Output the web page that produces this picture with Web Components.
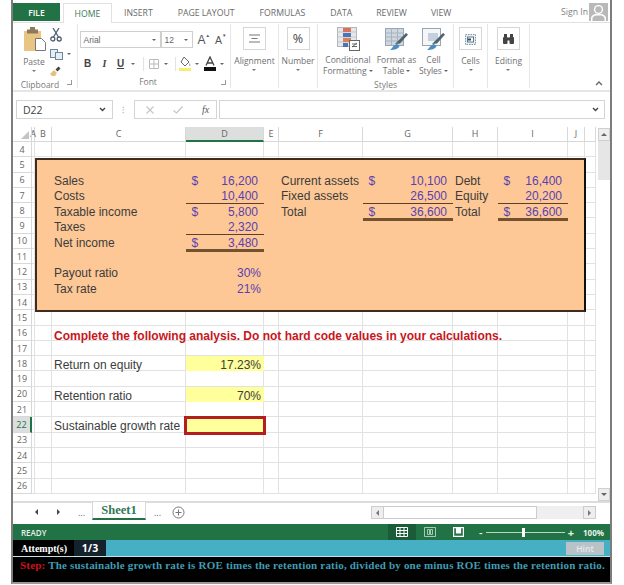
<!DOCTYPE html>
<html>
<head>
<meta charset="utf-8">
<title>Sheet</title>
<style>
    html, body { margin: 0; background: #fff; }
    body { padding: 0 12px 0 11px; height: 585px; box-sizing: border-box; overflow: hidden; }
</style>
</head>
<body>
<xl-window>
    <xl-tabs></xl-tabs>
    <xl-ribbon></xl-ribbon>
    <xl-formula-bar></xl-formula-bar>
    <xl-sheet></xl-sheet>
    <xl-sheet-tabs></xl-sheet-tabs>
    <xl-status></xl-status>
    <xl-attempt></xl-attempt>
    <xl-step></xl-step>
</xl-window>

<script>
// small helper, every element is just a template + shadow root
function define(name, html) {
    const template = document.createElement('template');
    template.innerHTML = html;
    customElements.define(name, class extends HTMLElement {
        constructor() {
            super();
            this.attachShadow({ mode: 'open' });
            this.shadowRoot.appendChild(template.content.cloneNode(true));
        }
    });
}

define('xl-window', /*html*/`
<style>
    :host {
        display: flex;
        flex-direction: column;
        height: 582px;
        border-left: 2px solid #7d7d7d;
        border-right: 2px solid #7d7d7d;
        border-bottom: 2px solid #9a9a9a;
        font-family: "Open Sans", sans-serif;
    }
</style>
<slot></slot>
`);

define('xl-tabs', /*html*/`
<style>
    :host {
        display: flex;
        height: 23px;
        padding-top: 3px;
        box-sizing: border-box;
        align-items: stretch;
        font-size: 8.700px;
        color: #6a6a6a;
        border-bottom: 1px solid #e1e1e1;
        flex: none;
    }
    .file {
        width: 47px;
        height: 18px;
        background: #217346;
        color: #fff;
        display: flex;
        align-items: center;
        justify-content: center;
        font-weight: 600;
        font-size: 8.500px;
    }
    .home {
        width: 49px;
        height: 20px;
        margin-left: 3px;
        background: #fff;
        border: 1px solid #e1e1e1;
        border-bottom: 0;
        box-sizing: border-box;
        display: flex;
        align-items: center;
        justify-content: center;
        color: #3c7a58;
    }
    .tab { display: flex; align-items: center; height: 20px; }
    .sign {
        margin-left: auto;
        display: flex;
        align-items: center;
        gap: 1px;
        height: 18px;
        padding-right: 2px;
        color: #808080;
    }
</style>
<div class="file">FILE</div>
<div class="home">HOME</div>
<div class="tab" style="margin-left:12px">INSERT</div>
<div class="tab" style="margin-left:25px">PAGE LAYOUT</div>
<div class="tab" style="margin-left:25px">FORMULAS</div>
<div class="tab" style="margin-left:25px">DATA</div>
<div class="tab" style="margin-left:24px">REVIEW</div>
<div class="tab" style="margin-left:24px">VIEW</div>
<div class="sign">Sign In
    <svg width="19" height="18" viewBox="0 0 19 18">
        <rect width="19" height="18" fill="#b9b9b9"/>
        <circle cx="9.500" cy="6.500" r="4.600" fill="#fff"/>
        <circle cx="9.500" cy="6.500" r="3.200" fill="#b9b9b9"/>
        <path d="M2 18v-3c0-2 3-4 5-4h5c2 0 5 2 5 4v3h-1.500v-3c0-1-2-2.500-3.500-2.500H7c-1.500 0-3.500 1.500-3.500 2.500v3z" fill="#fff"/>
    </svg>
</div>
`);

define('xl-rgroup', /*html*/`
<style>
    :host {
        display: flex;
        flex-direction: column;
        align-items: center;
        height: 64px;
        box-sizing: border-box;
        border-right: 1px solid #e6e6e6;
        position: relative;
        flex: none;
    }
    .body { height: 51px; width: 100%; display: flex; align-items: flex-start; justify-content: center; }
    .name { font-size: 8.500px; color: #7a7a7a; height: 12px; line-height: 12px; margin-top: 4px; text-align: center; }
</style>
<div class="body"><slot></slot></div>
<div class="name"><slot name="name"></slot></div>
`);

// a ribbon button: square icon box, label, small caret
define('xl-rbox', /*html*/`
<style>
    :host {
        display: flex;
        flex-direction: column;
        align-items: center;
        font-size: 8.500px;
        line-height: 11px;
        color: #6f6f6f;
        white-space: nowrap;
    }
    .box {
        width: 23px;
        height: 23px;
        box-sizing: border-box;
        border: 1px solid #d6d6d6;
        display: flex;
        align-items: center;
        justify-content: center;
        margin: 3px 0 5px;
        color: #444;
        font-size: 12.500px;
    }
    .caret { width: 0; height: 0; border: 2px solid transparent; border-top: 2px solid #777; margin-top: 3px; }
</style>
<div class="box"><slot name="icon"></slot></div>
<slot></slot>
<div class="caret"></div>
`);

define('xl-ribbon', /*html*/`
<style>
    :host {
        display: flex;
        height: 69px;
        padding-top: 1px;
        box-sizing: border-box;
        border-bottom: 2px solid #e6e6e6;
        position: relative;
        color: #6f6f6f;
        font-size: 8.500px;
        flex: none;
    }
    .clip-in { display: grid; grid-template-columns: 37px 27px; width: 64px; margin-top: 3px; }
    .paste { display: flex; flex-direction: column; align-items: center; grid-row: span 3; line-height: 11px; padding-left: 5px; gap: 5px; }
    .paste i { width: 0; height: 0; border: 2px solid transparent; border-top: 2px solid #777; margin-top: -2px; }
    .mini { display: flex; align-items: center; gap: 4px; }
    .c { display: inline-block; width: 0; height: 0; border: 2px solid transparent; border-top: 2px solid #666; margin-top: 2px; }
    .font-in { width: 149px; margin-top: 7px; display: flex; flex-direction: column; gap: 7px; }
    .row { display: flex; align-items: center; }
    .fname, .fsize {
        height: 17px;
        border: 1px solid #cfcfcf;
        box-sizing: border-box;
        display: flex;
        align-items: center;
        justify-content: space-between;
        padding: 0 4px 0 3px;
        font-size: 8.500px;
        color: #666;
    }
    .fname { width: 81px; font-family: "Liberation Sans", sans-serif; }
    .fsize { width: 32px; border-left: 1px solid #cfcfcf; margin-left: 0; font-family: "Liberation Sans", sans-serif; }
    .grow { font-family: "Liberation Sans", sans-serif; color: #555; }
    .grow sup { font-size: 4.500px; vertical-align: 7px; line-height: 0; }
    .btns { height: 17px; color: #444; font-family: "Liberation Sans", sans-serif; font-size: 10px; }
    .btns b, .btns em, .btns u { width: 8px; text-align: center; font-weight: bold; }
    .sep { width: 1px; height: 14px; background: #e3e3e3; }
    .styles-in { display: grid; grid-template-columns: 52px 45px 29px; width: 136px; padding-left: 4px; box-sizing: border-box; margin-top: 3px; }
    .st { display: flex; flex-direction: column; align-items: center; text-align: center; line-height: 11px; white-space: nowrap; gap: 3px; }
    .launcher { position: absolute; bottom: 3px; width: 4px; height: 4px; border-right: 1px solid #999; border-bottom: 1px solid #999; }
    .collapse { position: absolute; right: 7px; bottom: 4px; }
</style>
<xl-rgroup style="width:65px">
    <div class="clip-in">
        <div class="paste">
            <svg width="23" height="24" viewBox="0 0 23 24">
                <rect x="1" y="4" width="17" height="20" fill="#e9c583"/>
                <rect x="4" y="2.500" width="11" height="4" fill="#8b7b5c"/>
                <rect x="7" y="0" width="5" height="3" fill="#8b7b5c"/>
                <path d="M12.500 11.500h6l4 4v8h-10z" fill="#fff" stroke="#777"/>
            </svg>
            Paste
            <i></i>
        </div>
        <div class="mini" style="height:16px">
            <svg width="12" height="14" viewBox="0 0 12 14" fill="none" stroke="#506070" stroke-width="1.300">
                <path d="M3 0l5.500 9M9 0L3.500 9"/><circle cx="2.800" cy="11" r="2"/><circle cx="9.200" cy="11" r="2"/>
            </svg>
        </div>
        <div class="mini" style="height:19px;padding-top:3px;box-sizing:border-box">
            <svg width="13" height="11" viewBox="0 0 13 11" fill="#e6eef4" stroke="#6d8799"><rect x=".5" y=".5" width="7" height="8"/><rect x="5.500" y="3.500" width="7" height="7"/></svg>
            <span class="c"></span>
        </div>
        <div class="mini" style="height:14px;padding-top:3px;box-sizing:border-box">
            <svg width="11" height="10" viewBox="0 0 11 10"><path d="M0 8l4-4 3 3-2 3H2z" fill="#e6bf7a"/><path d="M5.500 3.500L8.500 0.500l2 2-3 3z" fill="#444"/></svg>
        </div>
    </div>
    <span slot="name" style="margin-right:10px">Clipboard</span>
    <span class="launcher" style="right:5px"></span>
</xl-rgroup>
<xl-rgroup style="width:153px">
    <div class="font-in">
        <div class="row">
            <div class="fname">Arial<span class="c"></span></div>
            <div class="fsize">12<span class="c"></span></div>
            <div class="grow" style="margin-left:5px;font-size:12px">A<sup>▲</sup></div>
            <div class="grow" style="margin-left:5px;font-size:10.500px">A<sup>▼</sup></div>
        </div>
        <div class="row btns">
            <b style="margin-left:4px">B</b>
            <em style="margin-left:9px;font-family:'Liberation Serif',serif">I</em>
            <u style="margin-left:8px">U</u>
            <span class="c" style="margin-left:6px"></span>
            <span class="sep" style="margin-left:8px"></span>
            <svg style="margin-left:5px" width="10" height="10" viewBox="0 0 10 10" fill="none" stroke="#bbb"><path d="M.5.500h9v9h-9zM5 .5v9M.5 5h9"/></svg>
            <span class="c" style="margin-left:5px"></span>
            <span class="sep" style="margin-left:7px"></span>
            <svg style="margin-left:3px" width="12" height="17" viewBox="0 0 12 17"><path d="M5 2l5 5-4 4-4-4z" fill="#fff" stroke="#666"/><path d="M10.500 8c1 1.500 1 3 0 3z" fill="#666"/><rect y="13" width="12" height="3" fill="#f5ef6d"/></svg>
            <span class="c" style="margin-left:4px"></span>
            <svg style="margin-left:5px" width="12" height="15" viewBox="0 0 12 15"><path d="M2 9.500L6 1l4 8.500M3.500 7h5" fill="none" stroke="#444" stroke-width="1.300"/><rect y="11" width="12" height="4" fill="#111"/></svg>
            <span class="c" style="margin-left:4px"></span>
        </div>
    </div>
    <span slot="name" style="margin-right:12px">Font</span>
    <span class="launcher" style="right:4px"></span>
</xl-rgroup>
<xl-rgroup style="width:48px">
    <xl-rbox>
        <svg slot="icon" width="11" height="9" viewBox="0 0 11 9" stroke="#777"><path d="M0 1h11M2.500 4.500h6M0 8h11"/></svg>
        Alignment
    </xl-rbox>
</xl-rgroup>
<xl-rgroup style="width:39px">
    <xl-rbox><span slot="icon">%</span>Number</xl-rbox>
</xl-rgroup>
<xl-rgroup style="width:136px">
    <div class="styles-in">
        <div class="st">
            <svg width="23" height="24" viewBox="0 0 23 24">
                <rect x="0.500" y="0.500" width="19" height="19" fill="#e4e9ef" stroke="#b5b5b5"/>
                <path d="M.5 5h19M.5 10h19M.5 15h19" stroke="#c5c5c5"/>
                <rect x="6" y="1" width="8" height="4" fill="#d9725a"/>
                <rect x="6" y="6" width="8" height="4" fill="#4d74b5"/>
                <rect x="6" y="11" width="8" height="4" fill="#d9825a"/>
                <rect x="6" y="16" width="5" height="4" fill="#4d74b5"/>
                <rect x="12.500" y="13.500" width="10" height="10" fill="#fff" stroke="#666"/>
                <path d="M15 20l5-4M15 17h5M15 19.500h5" stroke="#444" fill="none" stroke-width=".8"/>
            </svg>
            <span>Conditional<br>Formatting <span class="c"></span></span>
        </div>
        <div class="st">
            <svg width="23" height="24" viewBox="0 0 23 24">
                <rect x="0.500" y="1.500" width="18" height="17" fill="#cdd7e2" stroke="#9aa5ad"/>
                <path d="M.5 6h18M.5 10h18M.5 14h18M6.500 1.500v17M12.500 1.500v17" stroke="#aab3bd" fill="none"/>
                <path d="M10 17l3-3 8-8 2 1.500-8 9z" fill="#51616d"/>
                <path d="M5 23c2-1 3-5 7-6l2.500 2c-1 3-5 4-9.500 4z" fill="#4e8cc0"/>
            </svg>
            <span>Format as<br>Table <span class="c"></span></span>
        </div>
        <div class="st">
            <svg width="23" height="24" viewBox="0 0 23 24">
                <rect x="0.500" y="1.500" width="18" height="17" fill="#f4f6f8" stroke="#9aa5ad"/>
                <rect x="6" y="6" width="10" height="8" fill="#c3d0de"/>
                <path d="M10 17l3-3 8-8 2 1.500-8 9z" fill="#51616d"/>
                <path d="M5 23c2-1 3-5 7-6l2.500 2c-1 3-5 4-9.500 4z" fill="#4e8cc0"/>
            </svg>
            <span>Cell<br>Styles <span class="c"></span></span>
        </div>
    </div>
    <span slot="name">Styles</span>
</xl-rgroup>
<xl-rgroup style="width:34px">
    <xl-rbox>
        <svg slot="icon" width="11" height="12" viewBox="0 0 11 12"><rect x=".5" y="1.500" width="10" height="10" fill="#e8eef4" stroke="#7f98a8" stroke-dasharray="1.500 1"/><rect x="2.500" y="4" width="6" height="5" fill="#fff" stroke="#5d7688"/><rect x="3" y="5.500" width="3" height="2" fill="#2f4a5f"/></svg>
        Cells
    </xl-rbox>
</xl-rgroup>
<xl-rgroup style="width:42px">
    <xl-rbox>
        <svg slot="icon" width="11" height="10" viewBox="0 0 11 10" fill="#444"><rect x="0" y="3" width="4.500" height="7" rx="1"/><rect x="6.500" y="3" width="4.500" height="7" rx="1"/><rect x="1" y="0" width="3" height="4"/><rect x="7" y="0" width="3" height="4"/><rect x="4" y="3.500" width="3" height="3"/></svg>
        Editing
    </xl-rbox>
</xl-rgroup>
<svg class="collapse" width="8" height="6" viewBox="0 0 8 6" fill="none" stroke="#666" stroke-width="1.400"><path d="M1 5l3-3 3 3"/></svg>
`);

define('xl-formula-bar', /*html*/`
<style>
    :host {
        display: flex;
        align-items: center;
        height: 35px;
        padding: 8px 5px 8px 3px;
        box-sizing: border-box;
        color: #444;
        font-size: 10.500px;
        flex: none;
    }
    .box { height: 19px; border: 1px solid #d4d4d4; box-sizing: border-box; display: flex; align-items: center; }
    .name { width: 97px; justify-content: space-between; padding: 0 6px; }
    .dots { width: 20px; text-align: center; color: #aaa; font-size: 9px; }
    .fn { width: 83px; margin-left: 1px; position: relative; justify-content: flex-start; padding-left: 11px; gap: 19px; }
    .fn i { font-family: "Liberation Serif", serif; color: #555; font-size: 10px; }
    .input { flex: 1; margin-left: 2px; justify-content: flex-end; padding-right: 5px; }
</style>
<div class="box name">D22
    <svg width="7" height="5" viewBox="0 0 7 5" fill="none" stroke="#444" stroke-width="1.400"><path d="M1 1l2.500 2.500L6 1"/></svg>
</div>
<div class="dots">⁝</div>
<div class="box fn">
    <svg width="8" height="8" viewBox="0 0 8 8" fill="none" stroke="#c6c6c6" stroke-width="1.200"><path d="M.5.500l7 7M7.500.5l-7 7"/></svg>
    <svg width="10" height="8" viewBox="0 0 10 8" fill="none" stroke="#c6c6c6" stroke-width="1.200"><path d="M.5 4.500L3.500 7 9.500.5"/></svg>
    <i>fx</i>
</div>
<div class="box input">
    <svg width="7" height="5" viewBox="0 0 7 5" fill="none" stroke="#444" stroke-width="1.400"><path d="M1 1l2.500 2.500L6 1"/></svg>
</div>
`);

const COLS = [['', 19], ['A', 3], ['B', 17], ['C', 134], ['D', 78], ['E', 15], ['F', 84], ['G', 90], ['H', 45], ['I', 70], ['J', 17], ['', 11]];
const ROW_H = 15.3;
const TRACKS = COLS.map(c => c[1] + 'px').join(' ');

const sheetTemplate = document.createElement('template');
sheetTemplate.innerHTML = /*html*/`
<style>
    :host {
        display: flex;
        flex: none;
        height: 374px;
        position: relative;
        font-family: "Liberation Sans", sans-serif;
        font-size: 12px;
        color: #3c3c3c;
    }
    .grid {
        display: grid;
        grid-template-columns: ${TRACKS};
        grid-template-rows: 15px repeat(23, ${ROW_H}px);
        width: 583px;
        height: 367px;
        flex: none;
        overflow: hidden;
        align-content: start;
    }
    .cell { border-right: 1px solid #e2e2e2; border-bottom: 1px solid #e2e2e2; box-sizing: border-box; white-space: nowrap; line-height: 16px; }
    .ch, .rh { font-family: "Open Sans", sans-serif; font-size: 9px; color: #666; display: flex; align-items: center; justify-content: center; border-color: #d8d8d8; }
    .rh { padding-top: 1px; }
    .ch.sel { background: #dcdfdd; border-bottom: 2px solid #217346; }
    .rh.sel { background: #dcdfdd; border-right: 2px solid #217346; color: #217346; }
    .corner { position: relative; }
    .corner::after { content: ''; position: absolute; right: 2px; bottom: 2px; border: 4px solid transparent; border-right-color: #c4c4c4; border-bottom-color: #c4c4c4; }
    .label { padding: 1px 0 0 2px; position: relative; z-index: 1; }
    .yellow { background: #ffff9c; text-align: right; padding: 1px 3px 0 0; border: 0; }
    .note { font-weight: bold; color: #c8161d; padding-top: 2px; }
    .active { background: #ffff9c; outline: 3px solid #b41e1e; outline-offset: -1px; position: relative; z-index: 2; top: .5px; }
    .panel {
        position: absolute;
        left: 22px;
        top: 31px;
        width: 551px;
        height: 154px;
        box-sizing: border-box;
        border: 2px solid #3e2d1e;
        border-right-color: #111;
        background: #fdc896;
        display: grid;
        grid-template-columns: 15px 134px 78px 15px 84px 90px 45px 70px;
        grid-template-rows: repeat(9, 15.450px);
        padding-top: 12.800px;
        line-height: 17px;
    }
    .t { padding-left: 2px; white-space: nowrap; }
    .num { color: #5a3fb2; text-align: right; padding-right: 3px; }
    .d { color: #5a3fb2; display: flex; justify-content: space-between; padding: 0 6px 0 5.500px; box-sizing: border-box; }
    .u { border-bottom: 1px solid #5e4022; }
    .uu { border-bottom: 3px solid #73532f; margin-bottom: -2px; }
    .bar { width: 12px; flex: none; margin-left: 2px; background: #fff; display: flex; flex-direction: column; padding-top: 1px; box-sizing: border-box; }
    .btn { height: 13px; flex: none; background: #eee; border: 1px solid #d0d0d0; box-sizing: border-box; display: flex; align-items: center; justify-content: center; }
    .tri-u { border: 3px solid transparent; border-bottom: 3px solid #666; border-top: 0; }
    .tri-d { border: 3px solid transparent; border-top: 3px solid #666; border-bottom: 0; }
    .thumb { height: 39px; flex: none; background: #e6e6e6; }
    .rest { flex: 1; }
</style>
<div class="grid"></div>
<div class="panel"></div>
<div class="bar">
    <div class="btn"><span class="tri-u"></span></div>
    <div class="thumb"></div>
    <div class="rest"></div>
    <div class="btn"><span class="tri-d"></span></div>
</div>
`;

class XlSheet extends HTMLElement {

    constructor() {
        super();
        this.attachShadow({ mode: 'open' });
        const sh = this.shadowRoot;
        sh.appendChild(sheetTemplate.content.cloneNode(true));
        this.grid = sh.querySelector('.grid');
        this.panel = sh.querySelector('.panel');
        this.drawGrid();
        this.drawPanel();
    }

    drawGrid() {
        const content = {
            '16C': ['note label', 'Complete the following analysis. Do not hard code values in your calculations.'],
            '18C': ['label', 'Return on equity'],
            '18D': ['yellow', '17.23%'],
            '20C': ['label', 'Retention ratio'],
            '20D': ['yellow', '70%'],
            '22C': ['label', 'Sustainable growth rate'],
            '22D': ['active', ''],
        };
        let html = '';
        COLS.forEach((c, i) => {
            const cls = i === 0 ? 'corner' : c[0] === 'D' ? 'sel' : '';
            html += `<div class="cell ch ${cls}">${c[0]}</div>`;
        });
        for (let r = 4; r <= 26; r++) {
            COLS.forEach((c, i) => {
                if (i === 0) {
                    html += `<div class="cell rh ${r === 22 ? 'sel' : ''}">${r}</div>`;
                    return;
                }
                const item = content[r + c[0]];
                html += `<div class="cell ${item ? item[0] : ''}">${item ? item[1] : ''}</div>`;
            });
        }
        this.grid.innerHTML = html;
    }

    drawPanel() {
        // rows and columns count inside the panel
        const put = (r, c, cls, text) =>
            `<div class="${cls}" style="grid-row:${r};grid-column:${c}">${text}</div>`;
        const money = (r, c, sign, val, cls = '') =>
            `<div class="d ${cls}" style="grid-row:${r};grid-column:${c}"><span>${sign}</span><span>${val}</span></div>`;

        let html = '';
        ['Sales', 'Costs', 'Taxable income', 'Taxes', 'Net income', '', 'Payout ratio', 'Tax rate'].forEach((t, i) => {
            if (t) html += put(i + 1, 2, 't', t);
        });
        html += money(1, 3, '$', '16,200');
        html += money(2, 3, '', '10,400', 'u');
        html += money(3, 3, '$', '5,800');
        html += money(4, 3, '', '2,320', 'u');
        html += money(5, 3, '$', '3,480', 'uu');
        html += put(7, 3, 'num', '30%');
        html += put(8, 3, 'num', '21%');

        html += put(1, 5, 't', 'Current assets') + put(2, 5, 't', 'Fixed assets') + put(3, 5, 't', 'Total');
        html += money(1, 6, '$', '10,100');
        html += money(2, 6, '', '26,500', 'u');
        html += money(3, 6, '$', '36,600', 'uu');

        html += put(1, 7, 't', 'Debt') + put(2, 7, 't', 'Equity') + put(3, 7, 't', 'Total');
        html += money(1, 8, '$', '16,400');
        html += money(2, 8, '', '20,200', 'u');
        html += money(3, 8, '$', '36,600', 'uu');
        this.panel.innerHTML = html;
    }

}
customElements.define('xl-sheet', XlSheet);

define('xl-sheet-tabs', /*html*/`
<style>
    :host {
        display: flex;
        align-items: flex-start;
        height: 23px;
        border-top: 2px solid #dcdcdc;
        box-sizing: border-box;
        font-size: 9px;
        color: #666;
        position: relative;
        flex: none;
    }
    .nav { display: flex; align-items: center; height: 18px; padding-left: 22px; width: 79px; box-sizing: border-box; }
    .tri-l { border: 3px solid transparent; border-right: 3px solid #444; border-left: 0; }
    .tri-r { border: 3px solid transparent; border-left: 3px solid #444; border-right: 0; }
    .sheet {
        width: 54px;
        height: 19px;
        margin-top: -2px;
        border: 1px solid #d8d8d8;
        border-bottom: 2px solid #217346;
        box-sizing: border-box;
        color: #2d7a55;
        font-family: "Liberation Serif", serif;
        font-weight: bold;
        font-size: 12.500px;
        display: flex;
        align-items: center;
        justify-content: center;
        background: #fff;
    }
    .more { display: flex; align-items: center; height: 18px; }
    .hs { position: absolute; right: 14px; top: 3px; width: 225px; height: 13px; display: flex; }
    .hb { width: 13px; background: #eee; border: 1px solid #ccc; box-sizing: border-box; display: flex; align-items: center; justify-content: center; }
    .ht { width: 153px; border: 1px solid #ccc; border-left: 0; box-sizing: border-box; background: #fff; }
    .hr { flex: 1; background: #efefef; margin-right: 13px; }
</style>
<div class="nav"><span class="tri-l"></span><span class="tri-r" style="margin-left:19px"></span><span style="margin-left:18px">...</span></div>
<div class="sheet">Sheet1</div>
<div class="more" style="margin-left:8px;width:18px">...</div>
<div class="more">
    <svg width="13" height="13" viewBox="0 0 13 13" fill="none" stroke="#777"><circle cx="6.500" cy="6.500" r="5.500"/><path d="M6.500 3.500v6M3.500 6.500h6"/></svg>
</div>
<div class="hs">
    <div class="hb"><span class="tri-l" style="border-right-color:#777"></span></div>
    <div class="ht"></div>
    <div class="hr"></div>
    <div class="hb" style="position:absolute;right:0;top:0;height:13px"><span class="tri-r" style="border-left-color:#777"></span></div>
</div>
`);

define('xl-status', /*html*/`
<style>
    :host {
        display: flex;
        align-items: center;
        height: 16px;
        background: #217346;
        color: #e8f1ec;
        font-size: 8px;
        font-weight: 600;
        padding-left: 8px;
        flex: none;
    }
    .views { margin-left: auto; display: flex; align-items: center; height: 16px; }
    .v { width: 28px; height: 16px; display: flex; align-items: center; justify-content: center; }
    .v.on { background: #1a5c38; }
    .zoom { display: flex; align-items: center; margin-left: 5px; width: 100px; padding: 0 3px 0 2px; box-sizing: border-box; gap: 3px; font-size: 11px; }
    .track { flex: 1; height: 1px; background: #b8d8c6; position: relative; }
    .track::after { content: ''; position: absolute; left: 36px; top: -4px; width: 3px; height: 9px; background: #fff; }
    .pct { width: 33px; text-align: center; font-size: 8px; font-weight: 700; }
</style>
READY
<div class="views">
    <div class="v on"><svg width="12" height="10" viewBox="0 0 12 10" fill="none" stroke="#fff"><path d="M.5.500h11v9H.5zM.5 3.500h11M.5 6.500h11M4 .5v9M8 .5v9"/></svg></div>
    <div class="v"><svg width="12" height="10" viewBox="0 0 12 10" fill="none" stroke="#a8c8b6"><path d="M.5.500h11v9H.5zM3.500 2.500h2v5h-2zM6.500 2.500h2v5h-2z"/></svg></div>
    <div class="v"><svg width="11" height="10" viewBox="0 0 11 10" fill="none" stroke="#fff" stroke-width="1.200"><path d="M.6.600h9.800v8.800H.6z"/><path d="M3.500 1v5h4V1" fill="#fff"/></svg></div>
    <div class="zoom"><span>-</span><div class="track"></div><span style="font-weight:700">+</span></div>
    <div class="pct">100%</div>
</div>
`);

define('xl-attempt', /*html*/`
<style>
    :host {
        display: flex;
        align-items: stretch;
        height: 17px;
        background: #46afc4;
        border-bottom: 1px solid #bfe3ea;
        box-sizing: border-box;
        flex: none;
        font-family: "Liberation Serif", serif;
        font-weight: bold;
        color: #fff;
    }
    .k { width: 61px; background: #000; display: flex; align-items: center; padding-left: 8px; box-sizing: border-box; font-size: 10px; }
    .v { width: 32px; background: #14222c; display: flex; align-items: center; justify-content: center; font-family: "Open Sans", sans-serif; font-weight: 700; font-size: 10.500px; }
    .hint { margin: 2px 6px 1px auto; width: 38px; background: #b9c3c7; color: #e6eaec; font-family: "Open Sans", sans-serif; font-weight: 600; font-size: 8.500px; display: flex; align-items: center; justify-content: center; }
</style>
<div class="k">Attempt(s)</div>
<div class="v">1/3</div>
<div class="hint">Hint</div>
`);

define('xl-step', /*html*/`
<style>
    :host {
        display: block;
        flex: 1;
        background: #000;
        color: #3f9db3;
        font-family: "Liberation Serif", serif;
        font-weight: bold;
        font-size: 11px;
        line-height: 14px;
        padding: 1px 0 0 7px;
        white-space: nowrap;
        letter-spacing: .195px;
    }
    b { color: #d0111b; }
</style>
<b>Step:</b> The sustainable growth rate is ROE times the retention ratio, divided by one minus ROE times the retention ratio.
`);
</script>
</body>
</html>
